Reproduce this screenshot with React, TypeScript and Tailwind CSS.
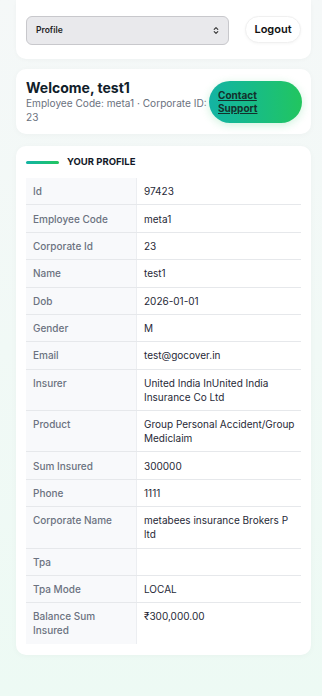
import React from 'react';

interface Row {
  label: string;
  value: string;
}

const rows: Row[] = [
  { label: 'Id', value: '97423' },
  { label: 'Employee Code', value: 'meta1' },
  { label: 'Corporate Id', value: '23' },
  { label: 'Name', value: 'test1' },
  { label: 'Dob', value: '2026-01-01' },
  { label: 'Gender', value: 'M' },
  { label: 'Email', value: 'test@gocover.in' },
  { label: 'Insurer', value: 'United India InUnited India Insurance Co Ltd' },
  { label: 'Product', value: 'Group Personal Accident/Group Mediclaim' },
  { label: 'Sum Insured', value: '300000' },
  { label: 'Phone', value: '1111' },
  { label: 'Corporate Name', value: 'metabees insurance Brokers P ltd' },
  { label: 'Tpa', value: '' },
  { label: 'Tpa Mode', value: 'LOCAL' },
  { label: 'Balance Sum Insured', value: '₹300,000.00' },
];

const App: React.FC = () => {
  return (
    <div className="min-h-screen bg-gradient-to-b from-[#f5f8f8] to-[#edfaf4] pl-4 pr-[11px] pb-10 font-['Inter','Noto_Sans',sans-serif]">
      {/* Top bar */}
      <div className="flex items-center gap-4 rounded-b-[10px] bg-white px-[10px] pt-[14px] pb-[14px] shadow-[0_1px_4px_rgba(0,0,0,0.03)]">
        <div className="mt-[2px] flex h-[29px] flex-1 items-center justify-between rounded-[6px] border border-[#c8c8cc] bg-[#e9e9ec] pl-[9px] pr-[9px]">
          <span className="text-[8.5px] font-semibold text-[#1f1f1f]">Profile</span>
          <svg width="6" height="9" viewBox="0 0 6 9" fill="none" stroke="#333" strokeWidth="1.1" strokeLinecap="round" strokeLinejoin="round">
            <path d="M1.2 3.4 L3 1.6 L4.8 3.4" />
            <path d="M1.2 5.6 L3 7.4 L4.8 5.6" />
          </svg>
        </div>
        <button className="h-[27px] w-[56px] shrink-0 rounded-full border border-[#f0f0f0] bg-white text-[11px] font-semibold text-[#111] shadow-[0_1px_3px_rgba(0,0,0,0.04)]">
          Logout
        </button>
      </div>

      {/* Welcome */}
      <div className="mt-[10px] flex items-center justify-between gap-[2px] rounded-[10px] bg-white py-[10px] pl-[10px] pr-[9px] shadow-[0_1px_6px_rgba(0,0,0,0.03)]">
        <div className="min-w-0 flex-1">
          <h1 className="text-[14px] font-bold leading-[17px] text-[#10202a]">Welcome, test1</h1>
          <p className="text-[10.1px] leading-[14px] text-[#6b7280]">
            Employee Code: meta1 · Corporate ID: 23
          </p>
        </div>
        <button className="flex h-[42px] w-[93px] shrink-0 items-center rounded-full bg-gradient-to-r from-[#14b3a3] to-[#22c55e] pl-[9px] text-left text-[10px] font-bold leading-[13px] text-[#13302c] underline shadow-[0_2px_8px_rgba(34,197,94,0.22)]">
          Contact
          <br />
          Support
        </button>
      </div>

      {/* Profile */}
      <div className="mt-[12px] rounded-[10px] bg-white px-[10px] pt-[10px] pb-[11px] shadow-[0_1px_6px_rgba(0,0,0,0.03)]">
        <div className="mb-[10px] flex h-[12px] items-center gap-2">
          <div className="h-[3px] w-[33px] rounded-full bg-gradient-to-r from-[#14b3a3] to-[#22c55e]" />
          <span className="text-[9.5px] font-bold text-[#111827]">YOUR PROFILE</span>
        </div>
        <div className="flex flex-col">
          {rows.map((row, i) => (
            <div
              key={row.label}
              className={`flex ${i < rows.length - 1 ? 'border-b border-[#e6e8eb]' : ''}`}
            >
              <div className="w-[111px] shrink-0 border-r border-[#eceef1] bg-[#f8f9fb] py-[6.2px] pl-[7px] pr-[8px] text-[10px] font-medium leading-[14px] text-[#6b7280]">
                {row.label}
              </div>
              <div className="min-w-0 flex-1 py-[6.2px] pl-[7px] pr-[4px] text-[10px] leading-[14px] text-[#1f2937]">
                {row.value}
              </div>
            </div>
          ))}
        </div>
      </div>
    </div>
  );
};

export default App;
